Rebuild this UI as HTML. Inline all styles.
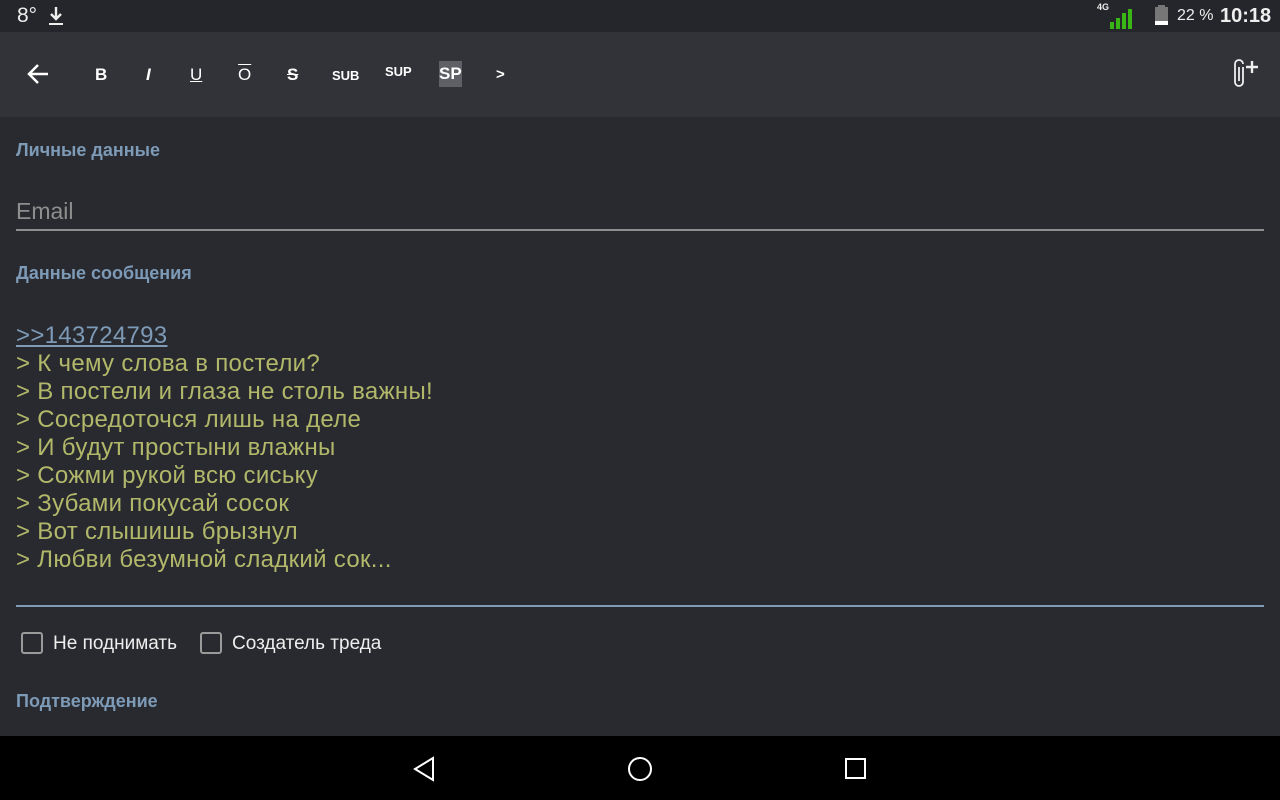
<!DOCTYPE html>
<html><head><meta charset="utf-8"><style>
*{margin:0;padding:0;box-sizing:border-box}
body{width:1280px;height:800px;background:#292a2f;font-family:"Liberation Sans",sans-serif;position:relative;overflow:hidden;color:#ddd}
.a{position:absolute;white-space:nowrap}
#sb{position:absolute;left:0;top:0;width:1280px;height:32px;background:#25262b}
#tb{position:absolute;left:0;top:32px;width:1280px;height:85px;background:#323338}
#nav{position:absolute;left:0;top:736px;width:1280px;height:64px;background:#000}
.lbl{color:#7d9ab7;font-weight:bold;font-size:18px}
.gt{color:#b2b86a;font-size:24px;line-height:28px;letter-spacing:0.3px}
.tbt{color:#fff;font-size:15px;font-weight:bold}
.cb{position:absolute;width:22px;height:22px;border:2px solid #9a9a9a;border-radius:3px}
</style></head><body>
<div id="sb"></div>
<div class="a" style="left:17px;top:4px;font-size:21px;color:#eee">8°</div>
<svg class="a" style="left:47px;top:6px" width="18" height="20"><path d="M9 1v11M4 8l5 5 5-5" stroke="#eee" stroke-width="2.4" fill="none"/><path d="M2 18h14" stroke="#eee" stroke-width="2"/></svg>
<div class="a" style="left:1097px;top:2px;font-size:9px;font-weight:bold;color:#eee">4G</div>
<svg class="a" style="left:1110px;top:8px" width="26" height="22"><rect x="0" y="14" width="4" height="7" fill="#3ab516"/><rect x="6" y="10" width="4" height="11" fill="#3ab516"/><rect x="12" y="5" width="4" height="16" fill="#3ab516"/><rect x="18" y="1" width="4" height="20" fill="#3ab516"/></svg>
<svg class="a" style="left:1155px;top:5px" width="14" height="20"><rect x="3" y="0" width="7" height="3" fill="#777"/><rect x="0" y="2" width="13" height="18" fill="#777"/><rect x="0" y="16" width="13" height="4" fill="#fff"/></svg>
<div class="a" style="left:1177px;top:7px;font-size:16px;color:#eee">22 %</div>
<div class="a" style="left:1220px;top:5px;font-size:20px;color:#eee;font-weight:bold">10:18</div>

<div id="tb"></div>
<svg class="a" style="left:26px;top:63px" width="24" height="22"><path d="M22 11H3M12 2l-9 9 9 9" stroke="#fff" stroke-width="2.5" fill="none"/></svg>
<div class="a tbt" style="left:95px;top:65px;font-size:17px">B</div>
<div class="a tbt" style="left:146px;top:65px;font-size:17px;font-style:italic">I</div>
<div class="a tbt" style="left:190px;top:65px;font-size:17px;font-weight:normal;text-decoration:underline">U</div>
<div class="a tbt" style="left:238px;top:65px;font-size:17px;font-weight:normal;text-decoration:overline">O</div>
<div class="a tbt" style="left:287px;top:65px;font-size:17px;text-decoration:line-through">S</div>
<div class="a tbt" style="left:332px;top:68px;font-size:13px">SUB</div>
<div class="a tbt" style="left:385px;top:64px;font-size:13px">SUP</div>
<div class="a" style="left:439px;top:61px;width:23px;height:26px;background:#5f6065"></div>
<div class="a tbt" style="left:439px;top:64px;font-size:17px">SP</div>
<div class="a tbt" style="left:496px;top:66px;font-size:15px">&gt;</div>
<svg class="a" style="left:1230px;top:58px" width="34" height="32"><path d="M13 9v15a4 4 0 0 1-8 0V6a4 4 0 0 1 8 0" stroke="#eee" stroke-width="1.8" fill="none"/><path d="M9 9v14" stroke="#eee" stroke-width="1.8"/><path d="M22 3v12M16 9h12" stroke="#eee" stroke-width="2.4"/></svg>

<div class="a lbl" style="left:16px;top:140px">Личные данные</div>
<div class="a" style="left:16px;top:198px;font-size:23px;color:#8e8e8e">Email</div>
<div class="a" style="left:16px;top:229px;width:1248px;height:2px;background:#8e8e8e"></div>
<div class="a lbl" style="left:16px;top:263px">Данные сообщения</div>
<div class="a gt" style="left:16px;top:322px">
<span style="color:#7d9ab7;text-decoration:underline">&gt;&gt;143724793</span><br>
&gt; К чему слова в постели?<br>
&gt; В постели и глаза не столь важны!<br>
&gt; Сосредоточся лишь на деле<br>
&gt; И будут простыни влажны<br>
&gt; Сожми рукой всю сиську<br>
&gt; Зубами покусай сосок<br>
&gt; Вот слышишь брызнул<br>
&gt; Любви безумной сладкий сок...</div>
<div class="a" style="left:16px;top:605px;width:1248px;height:2px;background:#7d9ab7"></div>
<div class="cb" style="left:21px;top:632px"></div>
<div class="a" style="left:53px;top:633px;font-size:19px;color:#eee">Не поднимать</div>
<div class="cb" style="left:200px;top:632px"></div>
<div class="a" style="left:232px;top:633px;font-size:19px;color:#eee">Создатель треда</div>
<div class="a lbl" style="left:16px;top:691px">Подтверждение</div>

<div id="nav"></div>
<svg class="a" style="left:412px;top:756px" width="24" height="26"><path d="M21 2L3 13l18 11z" stroke="#fff" stroke-width="2" fill="none"/></svg>
<svg class="a" style="left:627px;top:756px" width="26" height="26"><circle cx="13" cy="13" r="11" stroke="#fff" stroke-width="2" fill="none"/></svg>
<svg class="a" style="left:845px;top:758px" width="22" height="22"><rect x="1" y="1" width="19" height="19" stroke="#fff" stroke-width="2" fill="none"/></svg>
</body></html>
